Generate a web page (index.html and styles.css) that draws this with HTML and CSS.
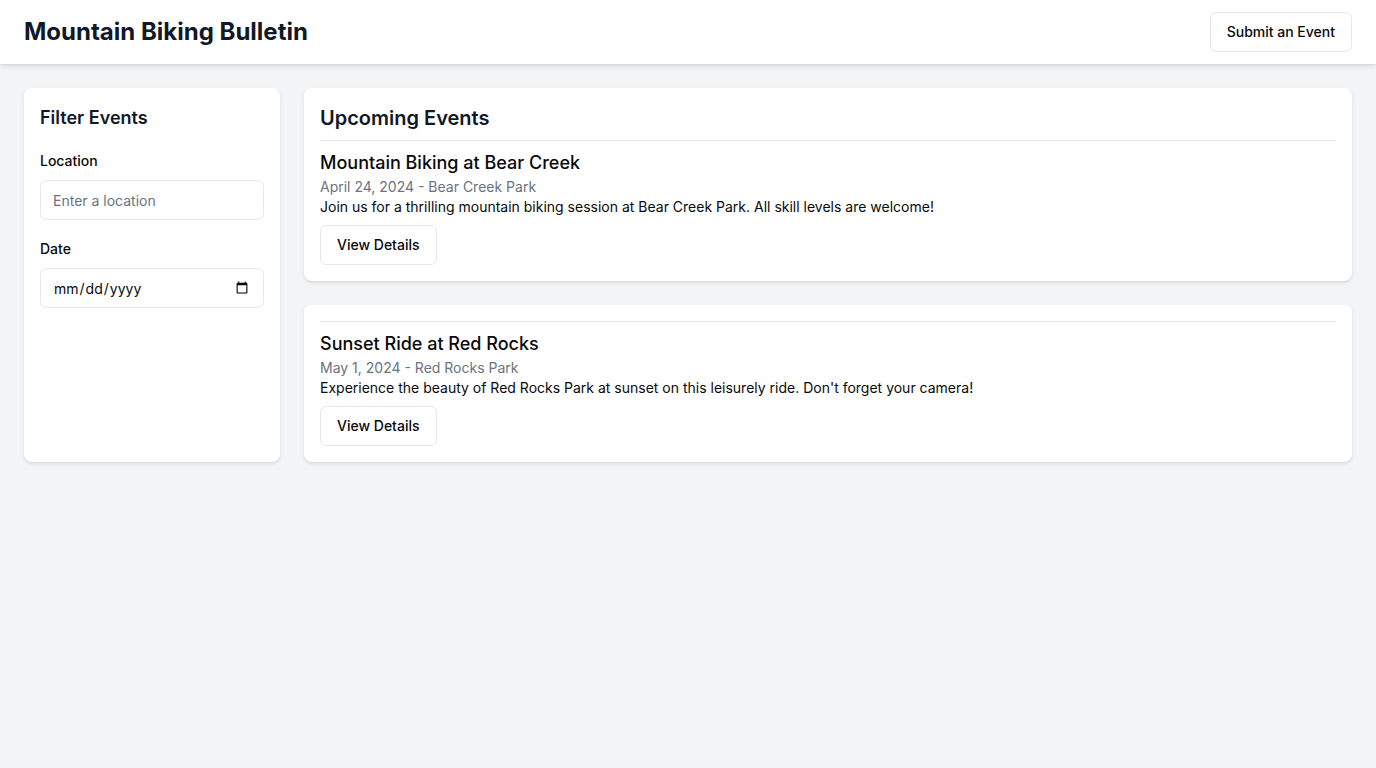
FILE: index.html
```html
<!DOCTYPE html>
<html lang="en">
<head>
<meta charset="utf-8">
<title>Mountain Biking Bulletin</title>
<link rel="stylesheet" href="styles.css">
</head>
<body>
<header class="topbar">
  <h1 class="brand">Mountain Biking Bulletin</h1>
  <button class="btn">Submit an Event</button>
</header>
<div class="layout">
  <aside class="card sidebar">
    <h2 class="side-title">Filter Events</h2>
    <label class="field-label" for="loc">Location</label>
    <input class="field" id="loc" type="text" placeholder="Enter a location">
    <label class="field-label" for="dt">Date</label>
    <input class="field" id="dt" type="date">
  </aside>
  <main class="events">
    <section class="card">
      <h2 class="main-title">Upcoming Events</h2>
      <div class="event">
        <h3 class="event-title">Mountain Biking at Bear Creek</h3>
        <p class="event-meta">April 24, 2024 - Bear Creek Park</p>
        <p class="event-desc">Join us for a thrilling mountain biking session at Bear Creek Park. All skill levels are welcome!</p>
        <button class="btn event-btn">View Details</button>
      </div>
    </section>
    <section class="card">
      <div class="event">
        <h3 class="event-title">Sunset Ride at Red Rocks</h3>
        <p class="event-meta">May 1, 2024 - Red Rocks Park</p>
        <p class="event-desc">Experience the beauty of Red Rocks Park at sunset on this leisurely ride. Don't forget your camera!</p>
        <button class="btn event-btn">View Details</button>
      </div>
    </section>
  </main>
</div>
</body>
</html>
```
FILE: styles.css
```css
* { box-sizing: border-box; }
html, body { margin: 0; padding: 0; }
body {
  background: #f3f4f6;
  font-family: Inter, "Noto Sans", sans-serif;
  color: #111827;
  min-height: 768px;
}
.topbar {
  height: 64px;
  background: #fff;
  display: flex;
  align-items: center;
  justify-content: space-between;
  padding: 0 24px;
  box-shadow: 0 2px 6px rgba(0,0,0,0.10), 0 1px 2px rgba(0,0,0,0.06);
  position: relative;
}
.brand {
  margin: 0;
  font-size: 24px;
  line-height: 32px;
  font-weight: 700;
  color: #111827;
}
.btn {
  font-family: inherit;
  font-size: 14px;
  font-weight: 500;
  line-height: 20px;
  height: 40px;
  padding: 0 16px;
  background: #fff;
  color: #09090b;
  border: 1px solid #e5e7eb;
  border-radius: 6px;
  cursor: pointer;
}
.layout {
  display: grid;
  grid-template-columns: 256px 1fr;
  gap: 24px;
  padding: 24px;
  align-items: stretch;
}
.card {
  background: #fff;
  border-radius: 8px;
  padding: 16px;
  box-shadow: 0 2px 4px rgba(0,0,0,0.08), 0 1px 2px rgba(0,0,0,0.05);
}
.sidebar {
  display: flex;
  flex-direction: column;
}
.side-title {
  margin: 0 0 19px;
  font-size: 18px;
  line-height: 28px;
  font-weight: 600;
  color: #111827;
}
.field-label {
  display: block;
  font-size: 14px;
  line-height: 20px;
  font-weight: 500;
  color: #09090b;
  margin-bottom: 9px;
}
.field {
  display: block;
  width: 100%;
  height: 40px;
  padding: 0 12px;
  border: 1px solid #e5e7eb;
  border-radius: 6px;
  font-family: inherit;
  font-size: 14px;
  color: #09090b;
  background: #fff;
  margin-bottom: 19px;
}
.field::placeholder { color: #6b7280; }
.events {
  display: flex;
  flex-direction: column;
  gap: 24px;
}
.main-title {
  margin: 0 0 8px;
  font-size: 20px;
  line-height: 28px;
  font-weight: 600;
  color: #111827;
}
.event {
  border-top: 1px solid #e5e7eb;
  padding-top: 8px;
}
.event-title {
  margin: 0;
  font-size: 18px;
  line-height: 28px;
  font-weight: 500;
  color: #09090b;
}
.event-meta {
  margin: 0;
  font-size: 14px;
  line-height: 20px;
  color: #6b7280;
}
.event-desc {
  margin: 0;
  font-size: 14px;
  line-height: 20px;
  color: #09090b;
}
.event-btn {
  margin-top: 8px;
}
```
